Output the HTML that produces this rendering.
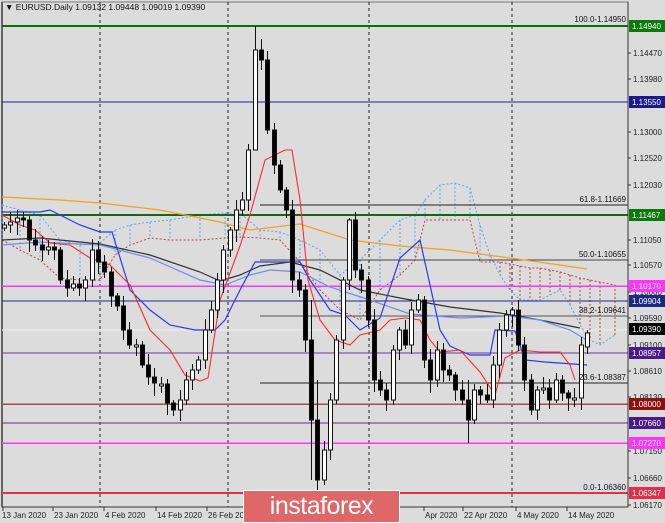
<!DOCTYPE html>
<html><head><meta charset="utf-8"><style>
html,body{margin:0;padding:0;background:#dcdcdc;width:665px;height:523px;overflow:hidden;font-family:"Liberation Sans",Tahoma,sans-serif}
svg{position:absolute;left:0;top:0}
.logo{position:absolute;left:243px;top:490px;width:157px;height:33px;background:#e06767;border:1px solid #fff;box-sizing:border-box;color:#fff;font-size:25px;text-align:center;line-height:30px;letter-spacing:-0.5px}
</style></head><body>
<svg id="s" width="665" height="523" xmlns="http://www.w3.org/2000/svg" font-family="Liberation Sans, sans-serif" font-size="8.5"></svg>
<div class="logo">instaforex</div>
<script>
const s=document.getElementById('s');const NS='http://www.w3.org/2000/svg';
function el(t,a,txt){const e=document.createElementNS(NS,t);for(const k in a)e.setAttribute(k,a[k]);if(txt!==undefined)e.textContent=txt;s.appendChild(e);return e;}
function line(x1,y1,x2,y2,c,w,d){return el('line',{x1,y1,x2,y2,stroke:c,'stroke-width':w||1,'stroke-dasharray':d||'none','shape-rendering':'crispEdges'});}
function pl(pts,c,w,d){el('polyline',{points:pts,fill:'none',stroke:c,'stroke-width':w||1,'stroke-dasharray':d||'none'});}
// frame
el('rect',{x:2,y:2,width:626,height:505,fill:'#dcdcdc',stroke:'#777','stroke-width':1});
line(2,2,2,507,'#666',2);
// vertical dashed separators
[100,228,369,512].forEach(x=>line(x,2,x,507,'#222',1,'3,3'));
// price line pale
line(2,330,628,330,'#eeeeee',1);
// cloud (dotted)
const cloud=[[2,205,240],[20,210,250],[40,215,260],[60,240,278],[80,245,280],[100,243,280],[115,230,255],[130,225,245],[150,222,238],[170,220,240],[200,215,240],[225,213,238],[240,213,237],[260,230,238],[280,232,240],[300,240,262],[320,250,290],[340,275,310],[360,260,320],[380,240,290],[400,220,275],[415,215,260],[425,200,220],[440,185,220],[455,183,220],[470,188,220],[480,225,262],[490,255,262],[500,275,262],[510,290,264],[520,300,266],[530,300,268],[540,300,268],[550,295,270],[560,290,272],[570,305,275],[580,325,278],[590,340,280],[600,345,282],[615,335,285]];
cloud.forEach(c=>{line(c[0],Math.min(c[1],c[2]),c[0],Math.max(c[1],c[2]),c[1]<c[2]?'#5aa8ee':'#c04040',1,'2,2');});
pl(cloud.map(c=>c[0]+','+c[1]).join(' '),'#5aa8ee',1,'2,2');
pl(cloud.map(c=>c[0]+','+c[2]).join(' '),'#c04040',1,'2,2');
// horizontal levels
line(2,26,628,26,'#0a6e0a',2);
line(2,102,628,102,'#2020a0',1);
line(260,205,628,205,'#222',1);
line(2,215,628,215,'#0a6e0a',2);
line(260,260,628,260,'#444',1);
line(2,286,628,286,'#ff33ff',1.5);
line(2,301,628,301,'#1b2a80',1);
line(260,316,628,316,'#555',1);
line(2,353,628,353,'#6a3aa0',1);
line(260,383,628,383,'#222',1);
line(2,404,628,404,'#a05050',1.5);
line(2,423,628,423,'#5a2a9a',1);
line(2,443,628,443,'#ff33ff',1.5);
line(2,493,628,493,'#e0304a',2);
// MAs
pl('2,197 60,200 100,203 160,210 220,222 250,230 300,224 350,240 400,246 450,250 510,258 560,265 587,269','#f5a020',1.2);
pl('2,240 40,238 100,244 150,255 200,272 220,281 240,275 260,266 290,262 320,270 360,290 400,298 450,307 500,313 540,320 580,328','#333',1.2);
pl('2,245 40,242 100,245 150,258 200,280 225,285 250,275 270,270 300,272 330,287 370,300 410,314 460,318 510,316 540,320 570,330 590,342','#6a8ff0',1.2);
pl('2,212 40,212 50,210 60,215 80,225 100,232 112,232 130,290 150,310 170,325 195,330 215,330 225,320 240,290 255,262 300,262 310,280 330,310 345,315 360,330 380,318 400,258 420,240 440,330 450,346 470,355 490,355 495,330 515,331 525,360 545,362 587,365','#2b3af0',1.2);
pl('2,215 20,225 35,230 50,243 70,245 90,258 110,265 130,285 150,330 170,350 185,375 200,381 208,378 220,300 240,246 250,215 265,160 285,150 292,150 300,200 308,280 320,320 335,340 350,345 360,335 380,330 390,320 405,318 420,320 430,340 440,352 460,350 480,372 495,395 505,358 520,350 540,352 560,352 570,365 575,380','#ff2a2a',1.1);
// candles
const cl=[225,222,218,220,240,245,250,247,250,280,288,284,288,280,250,262,272,296,306,330,345,345,365,377,383,384,403,410,400,380,370,360,330,310,280,250,230,210,200,150,50,60,130,165,190,210,280,290,340,420,480,450,400,340,280,220,270,280,320,380,390,400,350,330,345,310,300,360,380,350,370,375,390,400,420,390,395,400,365,330,315,310,345,380,410,390,388,400,380,393,398,398,345,333];
const n=cl.length,x0=4,x1=587,step=(x1-x0)/(n-1);
const wickOv={40:[26,120],49:[300,480],50:[380,495],55:[218,290],74:[380,443]};
let prev=228;
cl.forEach((c,i)=>{const x=Math.round(x0+i*step);let o=prev;if(Math.abs(o-c)<2)o=c+2;
let hi=Math.min(o,c)-3-((i*7)%9),lo=Math.max(o,c)+3+((i*5)%11);
if(wickOv[i]){hi=wickOv[i][0];lo=wickOv[i][1];}
if(i==n-1){hi=330;lo=354;o=347;}
line(x+0.5,hi,x+0.5,lo,'#111',1);
const up=c<o;el('rect',{x:x-1.5,y:Math.min(o,c),width:4,height:Math.max(1,Math.abs(o-c)),fill:up?'#fff':'#000',stroke:'#111','stroke-width':1,'shape-rendering':'crispEdges'});
prev=c;});
// fib labels
[['100.0-1.14950',22],['61.8-1.11669',202],['50.0-1.10655',257],['38.2-1.09641',313],['23.6-1.08387',380],['0.0-1.06360',490]].forEach(f=>el('text',{x:626,y:f[1],'text-anchor':'end',fill:'#111','font-size':'8'},f[0]));
// header
el('text',{x:5,y:10,fill:'#111','font-size':'8.5'},'\u25BC EURUSD.Daily  1.09132 1.09448 1.09019 1.09390');
// right axis
el('rect',{x:629,y:0,width:36,height:523,fill:'#dcdcdc'});
line(628,2,628,507,'#333',1);
[['1.14470',53],['1.13980',79],['1.13000',132],['1.12520',158],['1.12030',185],['1.11050',240],['1.10570',265],['1.10060',292],['1.09590',318],['1.09100',345],['1.08610',371],['1.08130',397],['1.07150',451],['1.06660',478],['1.06170',505]].forEach(a=>{line(628,a[1],631,a[1],'#333',1);el('text',{x:633,y:a[1]+3,fill:'#222','font-size':'8'},a[0]);});
[['1.14940',26,'#0a7a0a','#fff'],['1.13550',102,'#1a1a8a','#fff'],['1.11467',215,'#0a7a0a','#fff'],['1.10170',286,'#ff33ff','#fff'],['1.09904',301,'#1b2a80','#fff'],['1.09390',329,'#000','#fff'],['1.08957',353,'#4b1a8a','#fff'],['1.08000',404,'#8b1010','#fff'],['1.07660',423,'#4b1a8a','#fff'],['1.07270',443,'#ff33ff','#fff'],['1.06347',493,'#e0304a','#fff']].forEach(b=>{el('rect',{x:629,y:b[1]-6,width:36,height:12,fill:b[2]});el('text',{x:632,y:b[1]+3,fill:b[3],'font-size':'8'},b[0]);});
// bottom axis
line(2,507,628,507,'#333',1);
[['13 Jan 2020',2],['23 Jan 2020',54],['4 Feb 2020',105],['14 Feb 2020',157],['26 Feb 2020',208],['Apr 2020',425],['22 Apr 2020',464],['4 May 2020',517],['14 May 2020',568]].forEach(d=>{line(d[0]=='13 Jan 2020'?3:d[1]-1,507,d[0]=='13 Jan 2020'?3:d[1]-1,511,'#333',1);el('text',{x:d[1],y:518,fill:'#222','font-size':'8'},d[0]);});
</script>
</body></html>
